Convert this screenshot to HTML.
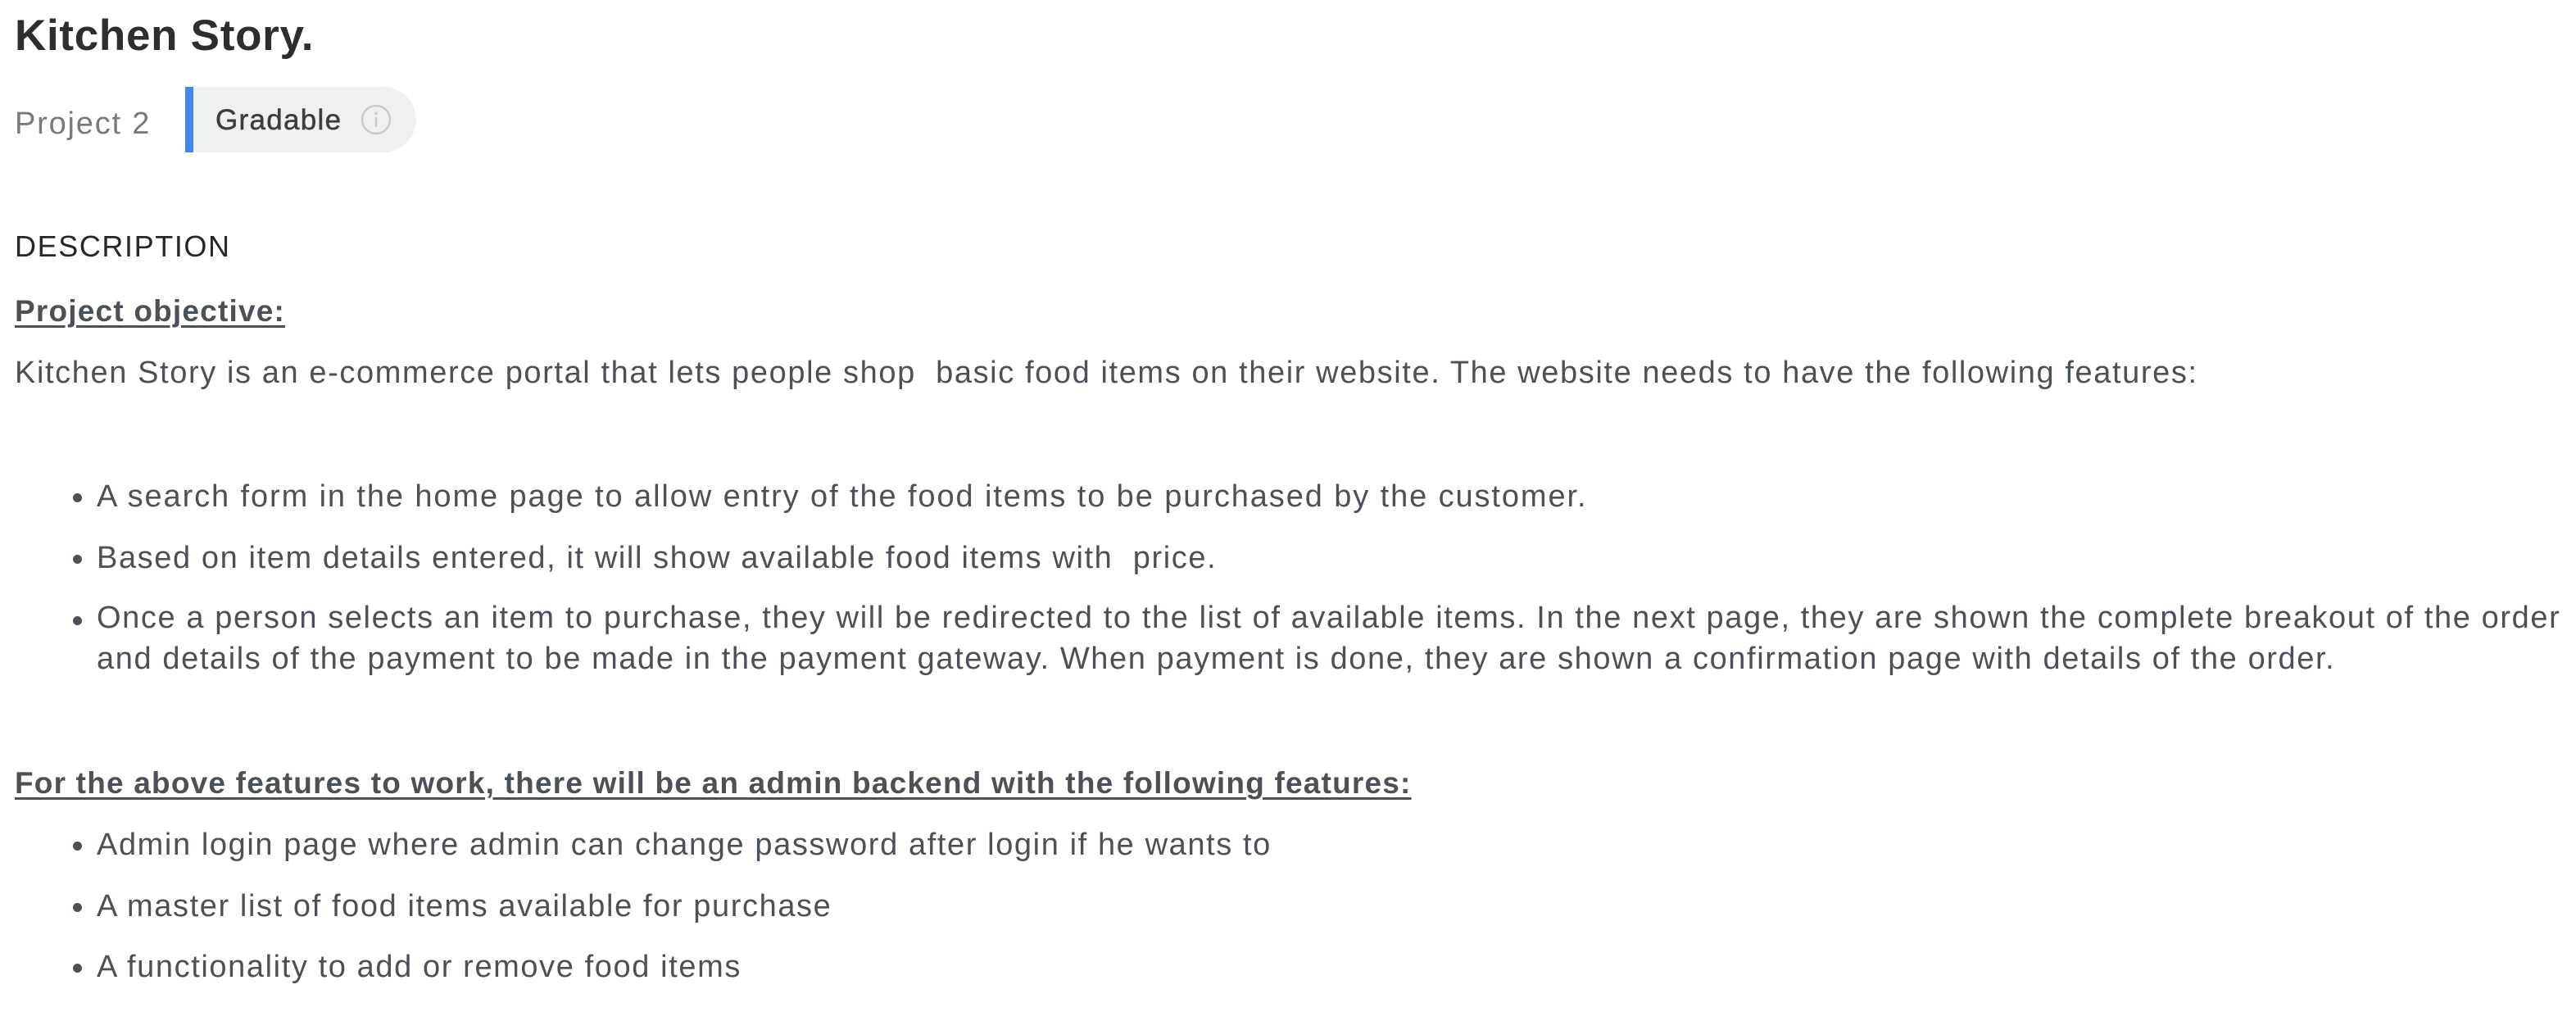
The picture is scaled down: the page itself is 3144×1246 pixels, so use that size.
<!DOCTYPE html>
<html><head><meta charset="utf-8"><style>
html,body{margin:0;padding:0;background:#fff;width:3144px;height:1246px;overflow:hidden}
body{position:relative;font-family:"Liberation Sans",sans-serif;color:#4a5158}
.t{position:absolute;white-space:nowrap;line-height:1}
.b{font-size:38px;letter-spacing:1.6px}
.dot{position:absolute;width:11px;height:11px;border-radius:50%;background:#4a5158}
.u{font-weight:bold;text-decoration:underline;text-decoration-thickness:3px;text-underline-offset:5px;font-size:37px;letter-spacing:1.2px}
</style></head><body>
<div class="t" style="left:18px;top:17px;font-size:53px;font-weight:bold;color:#2b2f33;letter-spacing:0.7px">Kitchen Story.</div>
<div class="t" style="left:18px;top:132px;font-size:38px;color:#7a7a7a;letter-spacing:1.8px">Project 2</div>
<div style="position:absolute;left:226px;top:106px;width:282px;height:80px;background:#eef1f4;border-radius:0 40px 40px 0;border-left:10px solid #4189e8;box-sizing:border-box"></div>
<div class="t" style="left:263px;top:129px;font-size:35px;color:#3b3d40;letter-spacing:1.3px;-webkit-text-stroke:0.5px #3b3d40">Gradable</div>
<svg style="position:absolute;left:439px;top:126px" width="40" height="40" viewBox="0 0 40 40"><circle cx="20" cy="20" r="17" fill="none" stroke="#c6cccd" stroke-width="2.5"/><circle cx="20" cy="12.5" r="1.8" fill="#c6cccd"/><rect x="18.8" y="17" width="2.4" height="12" fill="#c6cccd"/></svg>
<div class="t" style="left:18px;top:283px;font-size:36px;color:#25282b;letter-spacing:1.6px">DESCRIPTION</div>
<div class="t u" style="left:18px;top:361px">Project objective:</div>
<div class="t b" style="left:18px;top:436px">Kitchen Story is an e-commerce portal that lets people shop&nbsp; basic food items on their website. The website needs to have the following features:</div>

<div class="dot" style="left:89px;top:602px"></div>
<div class="t b" style="left:118px;top:587px;letter-spacing:1.9px">A search form in the home page to allow entry of the food items to be purchased by the customer.</div>
<div class="dot" style="left:89px;top:677px"></div>
<div class="t b" style="left:118px;top:662px">Based on item details entered, it will show available food items with&nbsp; price.</div>
<div class="dot" style="left:89px;top:752px"></div>
<div class="t b" style="left:118px;top:735px">Once a person selects an item to purchase, they will be redirected to the list of available items. In the next page, they are shown the complete breakout of the order</div>
<div class="t b" style="left:118px;top:785px">and details of the payment to be made in the payment gateway. When payment is done, they are shown a confirmation page with details of the order.</div>

<div class="t u" style="left:18px;top:937px">For the above features to work, there will be an admin backend with the following features:</div>
<div class="dot" style="left:89px;top:1027px"></div>
<div class="t b" style="left:118px;top:1012px">Admin login page where admin can change password after login if he wants to</div>
<div class="dot" style="left:89px;top:1102px"></div>
<div class="t b" style="left:118px;top:1087px">A master list of food items available for purchase</div>
<div class="dot" style="left:89px;top:1176px"></div>
<div class="t b" style="left:118px;top:1161px">A functionality to add or remove food items</div>
</body></html>
